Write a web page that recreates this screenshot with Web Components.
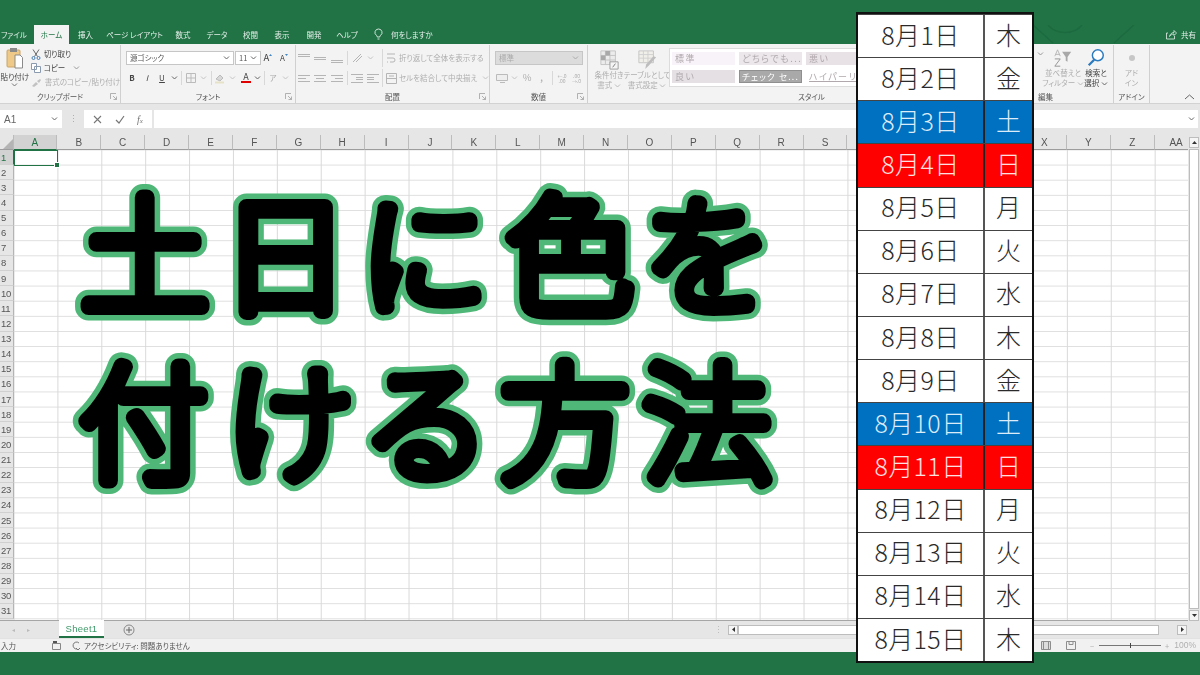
<!DOCTYPE html>
<html lang="ja">
<head>
<meta charset="utf-8">
<title>土日に色を付ける方法</title>
<style>
  html, body { margin: 0; padding: 0; background: #217346; overflow: hidden; }
  body { font-family: "Noto Sans CJK JP", "Noto Sans", sans-serif; }
</style>
</head>
<body>
<excel-app>
  <app-tabs></app-tabs>
  <app-ribbon></app-ribbon>
  <app-formula></app-formula>
  <sheet-grid></sheet-grid>
  <sheet-tabs></sheet-tabs>
  <app-status></app-status>
</excel-app>
<big-title></big-title>
<date-table></date-table>

<script>
const FONT = `"Noto Sans CJK JP", "Noto Sans", sans-serif`;

// small shared icons
const chev = (c = '#999') => `<svg width="7" height="4" viewBox="0 0 7 4"><path d="M1 .5l2.5 2.5L6 .5" fill="none" stroke="${c}"/></svg>`;
const lines = (rows, c = '#b5b5b5') => `<svg width="14" height="12" viewBox="0 0 14 12">${rows.map(r => `<path d="M${r[0]} ${r[2]}.5H${r[1]}" stroke="${c}"/>`).join('')}</svg>`;
const launcher = `<svg width="7" height="7" viewBox="0 0 7 7"><path d="M.5 6V.5H6M6.500 6.500L3 3M6.500 3.500v3h-3" fill="none" stroke="#a0a0a0" stroke-width=".8"/></svg>`;

class ExcelApp extends HTMLElement {
  constructor() {
    super();
    this.attachShadow({ mode: 'open' });
  }
  connectedCallback() {
    this.shadowRoot.innerHTML = `
      <style>
        :host { display: flex; flex-direction: column; width: 1200px; height: 675px; padding-top: 25px; box-sizing: border-box; background: #217346; filter: blur(.4px); overflow: hidden; font-family: ${FONT}; font-feature-settings: "palt"; }
      </style>
      <slot></slot>`;
  }
}

class AppTabs extends HTMLElement {
  constructor() {
    super();
    this.attachShadow({ mode: 'open' });
  }
  connectedCallback() {
    const tabs = [['ファイル', 34], ['ホーム', 35], ['挿入', 33], ['ページ レイアウト', 65], ['数式', 32], ['データ', 36], ['校閲', 31], ['表示', 32], ['開発', 32], ['ヘルプ', 34]];
    this.shadowRoot.innerHTML = `
      <style>
        :host { display: flex; height: 19px; flex: none; position: relative; color: #e4efe8; font-size: 7.5px; }
        .tab { display: flex; align-items: center; justify-content: center; box-sizing: border-box; white-space: nowrap; }
        .tab.first { padding-right: 6px; }
        .tab.on { background: #f3f3f3; color: #217346; }
        .bulb { display: flex; align-items: center; margin-left: 10px; gap: 8px; }
        .share { margin-left: auto; display: flex; align-items: center; gap: 4px; padding-right: 4px; }
        .deco { position: absolute; left: 1030px; top: 0; }
      </style>
      <svg class="deco" width="110" height="19" viewBox="0 0 110 19"><path d="M3 0l20 18M18 0c8 10 26 10 34 0M104 0L84 18" fill="none" stroke="#1c6a3f" stroke-width="1.5"/></svg>
      ${tabs.map((t, i) => `<div class="tab ${i === 0 ? 'first' : ''} ${i === 1 ? 'on' : ''}" style="width:${t[1]}px">${t[0]}</div>`).join('')}
      <div class="bulb">
        <svg width="9" height="13" viewBox="0 0 9 13"><path d="M4.500 1a3.500 3.500 0 0 0-2 6.400c.5.4.7 1 .7 1.600h2.600c0-.6.2-1.200.7-1.600A3.500 3.500 0 0 0 4.500 1zM3.500 11h2" fill="none" stroke="#e4efe8" stroke-width=".9"/></svg>
        <span>何をしますか</span>
      </div>
      <div class="share">
        <svg width="11" height="11" viewBox="0 0 11 11"><path d="M2 4H.5v6h8V7M3.500 7.500C4 5 6 3.500 8 3.500V1.500l2.500 2.500L8 6.500V5C6 5 4.500 6 3.500 7.500z" fill="none" stroke="#e4efe8" stroke-width=".8"/></svg>
        <span>共有</span>
      </div>`;
  }
}

class RbGroup extends HTMLElement {
  constructor() {
    super();
    this.attachShadow({ mode: 'open' });
  }
  connectedCallback() {
    const w = this.getAttribute('w');
    const bare = this.hasAttribute('bare');
    const left = this.hasAttribute('left');
    this.shadowRoot.innerHTML = `
      <style>
        :host { display: flex; flex-direction: column; flex: none; box-sizing: border-box; width: ${w}px; height: 58px; margin-top: 1px; ${bare ? '' : 'border-right: 1px solid #d0d0d0;'} }
        .body { flex: 1; min-height: 0; display: flex; flex-direction: column; padding-top: 3px; }
        .label { display: grid; grid-template-columns: ${left ? 'auto 1fr' : '1fr auto 1fr'}; align-items: center; height: 13px; flex: none; font-size: 7.5px; color: #555; line-height: 1; padding: 0 3px 0 3px; }
        .label span:last-child { justify-self: end; display: flex; }
        b { font-weight: 400; white-space: nowrap; }
      </style>
      <div class="body"><slot></slot></div>
      <div class="label">${left ? '' : '<i></i>'}<b>${this.getAttribute('label') || ''}</b><span>${this.hasAttribute('launch') ? launcher : ''}</span></div>`;
  }
}

class AppRibbon extends HTMLElement {
  constructor() {
    super();
    this.attachShadow({ mode: 'open' });
  }
  connectedCallback() {
    this.shadowRoot.innerHTML = `
      <style>
        :host { display: flex; flex: none; height: 59px; background: #f3f3f3; border-bottom: 1px solid #d2d2d2; font-size: 7.5px; color: #aeaeae; line-height: 1; position: relative; }
        .row { display: flex; align-items: center; height: 20px; flex: none; }
        .c { display: flex; align-items: center; justify-content: center; flex: none; height: 100%; }
        .sep { width: 1px; height: 14px; background: #d8d8d8; flex: none; }
        .select { box-sizing: border-box; height: 14px; background: #fff; border: 1px solid #c6c6c6; display: flex; align-items: center; justify-content: space-between; padding: 0 3px; color: #555; font-size: 7.5px; flex: none; }
        .select.off { background: #dcdcdc; color: #aaa; }
        .dark { color: #444; }
        .clip { display: flex; height: 42px; margin-top: -1px; }
        .paste { width: 30px; display: flex; flex-direction: column; align-items: center; color: #444; gap: 2px; }
        .cliprows { display: flex; flex-direction: column; padding-left: 1px; }
        .cliprows div { display: flex; align-items: center; gap: 3px; height: 14.5px; white-space: nowrap; }
        .big { display: flex; flex-direction: column; align-items: center; flex: none; line-height: 9.5px; text-align: center; white-space: nowrap; }
        .big svg.ico { height: 20px; flex: none; }
        .gallery { display: grid; grid-template-columns: 63px 63px 63px; gap: 5px 4px; background: #fff; border: 1px solid #dcdcdc; padding: 3px 2px; margin: 0 0 0 3px; font-size: 9px; letter-spacing: 1.5px; width: 200px; height: 31px; white-space: nowrap; overflow: hidden; flex: none; }
        .gallery div { height: 13px; display: flex; align-items: center; padding-left: 3px; color: #b0a8ad; overflow: hidden; }
        .arrow { position: absolute; right: 5px; bottom: 3px; }
        .more { position: absolute; left: 1037px; top: 8px; }
      </style>

      <rb-group w="121" label="クリップボード" launch>
        <div class="clip">
          <div class="paste">
            <svg width="17" height="24" viewBox="0 0 17 24"><rect x="1" y="3" width="13" height="17" rx="1" fill="#efc988" stroke="#c9a46a"/><rect x="4" y="1" width="7" height="4" fill="#8a8a8a"/><path d="M9 8h5l2.500 2.500V21H9z" fill="#fff" stroke="#8a8a8a"/></svg>
            <span style="white-space:nowrap">貼り付け</span>
            ${chev('#777')}
          </div>
          <div class="cliprows">
            <div class="dark"><svg width="10" height="11" viewBox="0 0 10 11"><path d="M2 .5l4.500 7M8 .5L3.500 7.500" stroke="#666" fill="none"/><circle cx="2.500" cy="9" r="1.500" fill="none" stroke="#4a7fb5"/><circle cx="7.500" cy="9" r="1.500" fill="none" stroke="#4a7fb5"/></svg><span>切り取り</span></div>
            <div class="dark"><svg width="10" height="10" viewBox="0 0 10 10"><path d="M.5.5h5v6h-5zM3.500 3.500h6v6h-6z" fill="#fff" stroke="#8a9bb0"/></svg><span>コピー</span><span style="margin-left:5px;display:flex">${chev()}</span></div>
            <div><svg width="11" height="9" viewBox="0 0 11 9"><path d="M1 8l4-4 2 2-4 3zM6 3l3-2 1 1-2 3z" fill="#c2c2c2"/></svg><span>書式のコピー/貼り付け</span></div>
          </div>
        </div>
      </rb-group>

      <rb-group w="175" label="フォント" launch>
        <div class="row" style="padding-left:5px;gap:1px">
          <div class="select" style="width:108px"><span>源ゴシック</span>${chev('#666')}</div>
          <div class="select" style="width:26px"><span>11</span>${chev('#666')}</div>
          <div class="c dark" style="width:14px;font-size:9.5px;margin-left:-1px">A<svg width="3" height="2" viewBox="0 0 3 2" style="margin-bottom:6px"><path d="M1.500 0L3 2H0z" fill="#3f87c7"/></svg></div>
          <div class="c dark" style="width:16px;font-size:8px">A<svg width="3" height="2" viewBox="0 0 3 2" style="margin-bottom:6px"><path d="M1.500 2L3 0H0z" fill="#3f87c7"/></svg></div>
        </div>
        <div class="row" style="padding-left:3.5px;color:#444;font-size:8px">
          <div class="c" style="width:15px;font-weight:700">B</div>
          <div class="c" style="width:15px;font-style:italic">I</div>
          <div class="c" style="width:15px;text-decoration:underline">U</div>
          <div class="c" style="width:9px">${chev('#666')}</div>
          <div class="sep" style="margin:0 3.5px 0 2.5px"></div>
          <div class="c" style="width:11px"><svg width="10" height="10" viewBox="0 0 10 10"><path d="M.5.500h9v9h-9zM5 .5v9M.5 5h9" fill="none" stroke="#bbb"/></svg></div>
          <div class="c" style="width:13px">${chev('#c4c4c4')}</div>
          <div class="sep" style="margin:0 1px 0 1.5px"></div>
          <div class="c" style="width:14px"><svg width="12" height="11" viewBox="0 0 12 11"><path d="M2 6l4-4 3 3-3 3z" fill="#d8d8d8" stroke="#bbb"/><path d="M1 9.500h9" stroke="#e6e2c8" stroke-width="2"/></svg></div>
          <div class="c" style="width:10px">${chev('#c4c4c4')}</div>
          <div class="c" style="width:16px;margin-left:1px;flex-direction:column;line-height:.9;color:#444"><span style="font-size:9px">A</span><span style="width:10px;height:2.5px;background:#e00000;display:block"></span></div>
          <div class="c" style="width:7px">${chev('#666')}</div>
          <div class="sep" style="margin:0 .5px 0 3px"></div>
          <div class="c" style="width:15px;font-size:7.5px;color:#aaa">ア</div>
          <div class="c" style="width:9px">${chev('#c4c4c4')}</div>
        </div>
      </rb-group>

      <rb-group w="194" label="配置" launch>
        <div class="row">
          <div class="c" style="width:16px">${lines([[1, 13, 2], [1, 13, 4]])}</div>
          <div class="c" style="width:16px">${lines([[1, 13, 5], [1, 13, 7]])}</div>
          <div class="c" style="width:18px">${lines([[1, 13, 8], [1, 13, 10]])}</div>
          <div class="sep" style="margin:0 1px 0 1px"></div>
          <div class="c" style="width:16px"><svg width="13" height="12" viewBox="0 0 13 12"><path d="M2 10L10 2M5 10l6-6" stroke="#b5b5b5" fill="none"/></svg></div>
          <div class="c" style="width:10px">${chev('#c4c4c4')}</div>
          <div class="sep" style="margin:0 0 0 7px;height:18px"></div>
          <div class="c" style="width:16px"><svg width="10" height="12" viewBox="0 0 10 12"><path d="M1 2h8M1 6h6a2 2 0 0 1 0 4H4M1 10h1" fill="none" stroke="#b5b5b5"/></svg></div>
          <span style="white-space:nowrap">折り返して全体を表示する</span>
        </div>
        <div class="row">
          <div class="c" style="width:16px">${lines([[1, 13, 3], [1, 9, 6], [1, 13, 9]])}</div>
          <div class="c" style="width:16px">${lines([[1, 13, 3], [3, 11, 6], [1, 13, 9]])}</div>
          <div class="c" style="width:18px">${lines([[1, 13, 3], [5, 13, 6], [1, 13, 9]])}</div>
          <div class="sep" style="margin:0 1px 0 1px"></div>
          <div class="c" style="width:16px">${lines([[1, 13, 2], [6, 13, 5], [6, 13, 7], [1, 13, 10]])}</div>
          <div class="c" style="width:15px">${lines([[1, 13, 2], [1, 8, 5], [1, 8, 7], [1, 13, 10]])}</div>
          <div class="sep" style="margin:0 0 0 2px;height:18px"></div>
          <div class="c" style="width:16px"><svg width="11" height="11" viewBox="0 0 11 11"><path d="M.5.500h10v10H.5zM.5 5.500h10M3 3h5" fill="none" stroke="#b5b5b5"/></svg></div>
          <span style="white-space:nowrap">セルを結合して中央揃え</span>
          <span style="margin-left:5px;display:flex">${chev('#c4c4c4')}</span>
        </div>
      </rb-group>

      <rb-group w="98" label="数値" launch>
        <div class="row" style="padding-left:5px">
          <div class="select off" style="width:88px"><span>標準</span>${chev('#aaa')}</div>
        </div>
        <div class="row" style="padding-left:4px;font-size:8px">
          <div class="c" style="width:15px"><svg width="12" height="9" viewBox="0 0 12 9"><path d="M.5.500h11v6H.5z" fill="#eee" stroke="#bbb"/><path d="M4 8.500h5" stroke="#bbb"/></svg></div>
          <div class="c" style="width:10px">${chev('#c4c4c4')}</div>
          <div class="c" style="width:16px;font-size:9.5px">%</div>
          <div class="c" style="width:13px;font-weight:700">,</div>
          <div class="sep" style="margin:0 2px 0 4px"></div>
          <div class="c" style="width:14px;font-size:5px;line-height:5.5px;text-align:center">←.0<br>.00</div>
          <div class="c" style="width:15px;font-size:5px;line-height:5.5px;text-align:center">.00<br>→.0</div>
        </div>
      </rb-group>

      <rb-group w="447" label="スタイル" bare>
        <div style="display:flex">
          <div class="big" style="width:36px;margin:2px 0 0 3px">
            <svg class="ico" width="21" height="20" viewBox="0 0 21 22"><path d="M1 1h16v15H1z" fill="#ececec" stroke="#c2c2c2"/><path d="M6 1v15M11 1v15M1 6h16M1 11h16" stroke="#c2c2c2"/><path d="M6 1h5v5H6zM1 6h5v5H1z" fill="#a9a9a9"/><path d="M11 13h9v8h-9z" fill="#f4f4f4" stroke="#999"/><path d="M14 19l3-4" stroke="#777"/></svg>
            <span>条件付き<br>書式 ${chev('#bbb')}</span>
          </div>
          <div class="big" style="width:38px;margin:2px 0 0 1px">
            <svg class="ico" width="21" height="20" viewBox="0 0 21 22"><path d="M1 1h16v13H1z" fill="#f1efe9" stroke="#c2c2c2"/><path d="M1 5h16M1 9h16M6 1v13M11 1v13" stroke="#cfcfcf"/><path d="M20 8L12 17l-4 4 1-5 8-9z" fill="#bdbdbd"/></svg>
            <span>テーブルとして<br>書式設定 ${chev('#bbb')}</span>
          </div>
          <div class="gallery">
            <div style="background:#f8f3f8">標準</div>
            <div style="background:#ebe7eb">どちらでも...</div>
            <div style="background:#e8e1e5">悪い</div>
            <div style="background:#e4e0e4">良い</div>
            <div style="background:#a9a9a9;color:#fff;outline:1px solid #8f8f8f;outline-offset:-1px;font-size:8.5px;letter-spacing:1.2px">チェック セ...</div>
            <div style="text-decoration:underline">ハイパーリ</div>
          </div>
        </div>
      </rb-group>

      <rb-group w="79" label="編集" left>
        <div style="display:flex;padding-left:10px">
          <div class="big" style="width:36px">
            <svg class="ico" width="20" height="20" viewBox="0 0 20 22"><path d="M9 4h10l-4 6v5l-2-1v-4z" fill="#a8a8a8"/><path d="M1 9l3-7 3 7M2 7h4" fill="none" stroke="#b4b4b4"/><path d="M1 12h6l-6 8h6" fill="none" stroke="#8f8f8f"/></svg>
            <span>並べ替えと<br>フィルター ${chev('#bbb')}</span>
          </div>
          <div class="big dark" style="width:30px">
            <svg class="ico" width="20" height="20" viewBox="0 0 20 22"><circle cx="12" cy="8" r="6" fill="#fff" stroke="#2a7ac0" stroke-width="1.6"/><path d="M8 13l-6 6" stroke="#2a7ac0" stroke-width="2.5"/></svg>
            <span>検索と<br>選択 ${chev('#666')}</span>
          </div>
        </div>
      </rb-group>

      <rb-group w="36" label="アドイン">
        <div class="big">
          <svg class="ico" width="20" height="20" viewBox="0 0 20 20"><circle cx="10" cy="10" r="3" fill="#c6c6c6"/></svg>
          <span>アド<br>イン</span>
        </div>
      </rb-group>

      <svg class="more" width="7" height="4" viewBox="0 0 7 4"><path d="M1 .5l2.500 2.500L6 .5" fill="none" stroke="#999"/></svg>
      <svg class="arrow" width="11" height="6" viewBox="0 0 11 6"><path d="M1 5l4.500-4L10 5" fill="none" stroke="#666"/></svg>`;
  }
}

class AppFormula extends HTMLElement {
  constructor() {
    super();
    this.attachShadow({ mode: 'open' });
  }
  connectedCallback() {
    this.shadowRoot.innerHTML = `
      <style>
        :host { display: flex; flex: none; height: 31px; box-sizing: border-box; padding: 6px 2px 7px 0; background: #e6e6e6; gap: 2px; font-family: "Liberation Sans", sans-serif; font-size: 10px; color: #666; }
        .box { background: #fff; display: flex; align-items: center; }
        .name { width: 62px; justify-content: space-between; padding: 0 4px; box-sizing: border-box; }
        .dots { width: 18px; display: flex; justify-content: center; align-items: center; color: #aaa; font-size: 9px; }
        .fx { width: 68px; justify-content: space-around; padding: 0 3px; box-sizing: border-box; color: #777; }
        .input { flex: 1; justify-content: flex-end; padding-right: 3px; }
      </style>
      <div class="box name"><span>A1</span>${chev('#666')}</div>
      <div class="dots">⋮</div>
      <div class="box fx">
        <svg width="9" height="9" viewBox="0 0 9 9"><path d="M1 1l7 7M8 1L1 8" stroke="#777" stroke-width="1.100"/></svg>
        <svg width="10" height="9" viewBox="0 0 10 9"><path d="M1 5l3 3 5-7" fill="none" stroke="#777" stroke-width="1.200"/></svg>
        <i style="font-family:'Liberation Serif',serif;font-size:10px">f<span style="font-size:7px">x</span></i>
      </div>
      <div class="box input">${chev('#666')}</div>`;
  }
}

class SheetGrid extends HTMLElement {
  constructor() {
    super();
    this.attachShadow({ mode: 'open' });
  }
  connectedCallback() {
    // T to W sit behind the date table, so they stay blank
    const cols = 'ABCDEFGHIJKLMNOPQRS    XYZ'.split('').concat('AA');
    const rows = Array.from({ length: 31 }, (_, i) => i + 1);
    this.shadowRoot.innerHTML = `
      <style>
        :host { display: grid; grid-template-columns: 1fr 12px; flex: none; height: 486px; background: #e6e6e6; font-family: "Liberation Sans", sans-serif; font-size: 10px; color: #555; }
        .sheet { display: grid; grid-template-columns: 13.5px 1fr; grid-template-rows: 15px 1fr; overflow: hidden; border-bottom: 1px solid #a6a6a6; }
        .corner { background: #e6e6e6; border-bottom: 1px solid #9d9d9d; border-right: 1px solid #bbb; box-sizing: border-box; display: flex; align-items: flex-end; justify-content: flex-end; }
        .heads { display: flex; overflow: hidden; }
        .head { flex: none; width: 43.9px; box-sizing: border-box; border-right: 1px solid #bcbcbc; border-bottom: 1px solid #9d9d9d; display: flex; align-items: center; justify-content: center; }
        .head.on { background: #d2d2d2; color: #217346; border-bottom-color: #217346; }
        .nums { display: flex; flex-direction: column; overflow: hidden; }
        .num { flex: none; height: 15.13px; box-sizing: border-box; border-right: 1px solid #b4b4b4; border-bottom: 1px solid #d0d0d0; display: flex; align-items: center; justify-content: flex-start; padding-left: 1px; font-size: 9.5px; letter-spacing: -.3px; }
        .num.on { background: #d2d2d2; color: #217346; border-right-color: #217346; }
        .cells { position: relative; background-color: #fff; background-image: linear-gradient(to right, #d9d9d9 1px, transparent 1px), linear-gradient(to bottom, #dedede 1px, transparent 1px); background-size: 43.9px 15.13px; background-position: 43.4px 0, 0 14.6px; }
        .sel { position: absolute; left: 0; top: 0; width: 44px; height: 16px; box-sizing: border-box; border: 1.5px solid #217346; }
        .sel i { position: absolute; right: -3px; bottom: -3px; width: 4px; height: 4px; background: #217346; border: .5px solid #fff; }
        .vbar { display: flex; flex-direction: column; background: #e6e6e6; padding: 2px 1px 0 1px; box-sizing: border-box; gap: 1px; }
        .btn { height: 11px; flex: none; background: #f5f5f5; border: 1px solid #bdbdbd; box-sizing: border-box; display: flex; align-items: center; justify-content: center; }
        .thumb { flex: none; height: 460px; background: #fff; border: 1px solid #bdbdbd; box-sizing: border-box; }
      </style>
      <div class="sheet">
        <div class="corner"><svg width="10" height="10" viewBox="0 0 10 10"><path d="M10 0v10H0z" fill="#b4b4b4"/></svg></div>
        <div class="heads">${cols.map((c, i) => `<div class="head ${i === 0 ? 'on' : ''}">${c.trim()}</div>`).join('')}</div>
        <div class="nums">${rows.map((r, i) => `<div class="num ${i === 0 ? 'on' : ''}">${r}</div>`).join('')}</div>
        <div class="cells"><div class="sel"><i></i></div></div>
      </div>
      <div class="vbar">
        <div class="btn"><svg width="5" height="3" viewBox="0 0 5 3"><path d="M2.500 0L5 3H0z" fill="#333"/></svg></div>
        <div class="thumb"></div>
        <div class="btn"><svg width="5" height="3" viewBox="0 0 5 3"><path d="M2.500 3L5 0H0z" fill="#333"/></svg></div>
      </div>`;
  }
}

class SheetTabs extends HTMLElement {
  constructor() {
    super();
    this.attachShadow({ mode: 'open' });
  }
  connectedCallback() {
    this.shadowRoot.innerHTML = `
      <style>
        :host { display: flex; align-items: stretch; flex: none; height: 17px; background: #e6e6e6; font-size: 9px; color: #bbb; }
        .nav { width: 59px; display: flex; align-items: center; gap: 12px; padding-left: 12px; box-sizing: border-box; font-size: 6px; }
        .tab { width: 45px; background: #fff; color: #3f9a6a; box-sizing: border-box; border-bottom: 2px solid #217346; margin-top: -1px; display: flex; align-items: center; justify-content: center; font-family: "Liberation Sans", sans-serif; font-size: 9.5px; letter-spacing: .3px; }
        .add { width: 50px; display: flex; align-items: center; justify-content: center; }
        .dots { margin-left: auto; width: 20px; display: flex; align-items: center; justify-content: center; }
        .hbar { display: flex; align-items: center; width: 460px; margin-right: 12px; }
        .btn { width: 10px; height: 10px; box-sizing: border-box; background: #f5f5f5; border: 1px solid #bdbdbd; display: flex; align-items: center; justify-content: center; flex: none; }
        .track { width: 421px; height: 10px; background: #fff; border: 1px solid #bdbdbd; box-sizing: border-box; flex: none; }
      </style>
      <div class="nav"><span>◂</span><span>▸</span></div>
      <div class="tab">Sheet1</div>
      <div class="add"><svg width="12" height="12" viewBox="0 0 12 12"><circle cx="6" cy="6" r="5" fill="none" stroke="#888"/><path d="M6 3v6M3 6h6" stroke="#666"/></svg></div>
      <div class="dots">⋮</div>
      <div class="hbar">
        <div class="btn"><svg width="3" height="5" viewBox="0 0 3 5"><path d="M0 2.500L3 0v5z" fill="#333"/></svg></div>
        <div class="track"></div>
        <div style="width:18px;flex:none"></div>
        <div class="btn"><svg width="3" height="5" viewBox="0 0 3 5"><path d="M3 2.500L0 0v5z" fill="#333"/></svg></div>
      </div>`;
  }
}

class AppStatus extends HTMLElement {
  constructor() {
    super();
    this.attachShadow({ mode: 'open' });
  }
  connectedCallback() {
    this.shadowRoot.innerHTML = `
      <style>
        :host { display: flex; align-items: center; flex: none; height: 14px; background: #f1f1f1; font-size: 7.5px; color: #555; padding: 0 4px 0 1px; line-height: 1; border-top: 1px solid #e2e2e2; box-sizing: border-box; }
        .right { margin-left: auto; display: flex; align-items: center; color: #b0b0b0; }
        .slider { width: 62px; height: 1px; background: #777; position: relative; margin: 0 3px; }
        .slider i { position: absolute; left: 31px; top: -2px; width: 1px; height: 5px; background: #444; }
      </style>
      <span style="width:51px">入力</span>
      <svg width="9" height="9" viewBox="0 0 9 9"><path d="M.5 2.500h8v6h-8z" fill="none" stroke="#888"/><path d="M1 0h4v2H1z" fill="#555"/></svg>
      <svg style="margin-left:11px" width="9" height="10" viewBox="0 0 9 10"><path d="M7 2a3.500 3.500 0 1 0-2 6M4 7l2 2 2-2" fill="none" stroke="#777"/></svg>
      <span style="margin-left:3px;white-space:nowrap">アクセシビリティ: 問題ありません</span>
      <div class="right">
        <svg width="10" height="9" viewBox="0 0 10 9"><path d="M.5.500h9v8h-9zM2.500.5v8M7.500.5v8" fill="#ddd" stroke="#8e8e8e"/></svg>
        <svg style="margin:0 14px 0 15px" width="10" height="9" viewBox="0 0 10 9"><path d="M.5.500h9v8h-9zM3 .5v3h4v-3" fill="none" stroke="#8e8e8e"/></svg>
        <span style="margin-right:2px">−</span>
        <div class="slider"><i></i></div>
        <span style="margin:0 5px 0 1px">+</span>
        <span style="font-family:'Liberation Sans',sans-serif;font-size:8.5px">100%</span>
      </div>`;
  }
}

// title sits on top of the sheet
class BigTitle extends HTMLElement {
  constructor() {
    super();
    this.attachShadow({ mode: 'open' });
  }
  connectedCallback() {
    const line1 = '81 221 360 506 644';
    const line2 = '80 225 362 501 643';
    this.shadowRoot.innerHTML = `
      <style>
        :host { display: block; position: absolute; left: 0; top: 0; width: 860px; height: 675px; pointer-events: none; }
        text { font-family: ${FONT}; font-size: 128px; font-weight: 100; }
      </style>
      <svg width="860" height="675" viewBox="0 0 860 675">
        <g stroke="#4fb878" stroke-width="27" stroke-linejoin="round" stroke-linecap="round">
          <use href="#l1"></use><use href="#l2"></use>
        </g>
        <g fill="#000" stroke="#000" stroke-width="16" stroke-linejoin="round" stroke-linecap="round">
          <text id="l1" x="${line1}" y="304">土日に色を</text>
          <text id="l2" x="${line2}" y="472">付ける方法</text>
        </g>
      </svg>`;
  }
}

class DateTable extends HTMLElement {
  constructor() {
    super();
    this.attachShadow({ mode: 'open' });
  }
  connectedCallback() {
    const days = ['木', '金', '土', '日', '月', '火', '水'];
    const rows = Array.from({ length: 15 }, (_, i) => {
      const d = days[i % 7];
      const kind = d === '土' ? 'sat' : d === '日' ? 'sun' : '';
      return `<div class="row ${kind}"><div class="date">8月${i + 1}日</div><div class="day">${d}</div></div>`;
    });
    this.shadowRoot.innerHTML = `
      <style>
        :host { display: flex; flex-direction: column; position: absolute; left: 856px; top: 12px; width: 178px; height: 651px; box-sizing: border-box; border: 2px solid #111; background: #fff; font-family: ${FONT}; font-weight: 300; color: #2a2a2a; }
        .row { flex: 1; min-height: 0; display: grid; grid-template-columns: 127px 1fr; border-top: 1.5px solid #444; }
        .row:first-child { border-top: none; }
        .date, .day { display: flex; align-items: center; justify-content: center; line-height: 1; padding-bottom: 4px; }
        .date { font-size: 25px; letter-spacing: .4px; border-right: 2px solid #555; }
        .day { font-size: 25px; }
        .sat { background: #0070c0; color: #dcecf8; }
        .sun { background: #ff0000; color: #ffe0e0; }
        .sat .date, .sun .date { border-right-color: #222; }
      </style>
      ${rows.join('')}`;
  }
}

customElements.define('excel-app', ExcelApp);
customElements.define('app-tabs', AppTabs);
customElements.define('rb-group', RbGroup);
customElements.define('app-ribbon', AppRibbon);
customElements.define('app-formula', AppFormula);
customElements.define('sheet-grid', SheetGrid);
customElements.define('sheet-tabs', SheetTabs);
customElements.define('app-status', AppStatus);
customElements.define('big-title', BigTitle);
customElements.define('date-table', DateTable);
</script>
</body>
</html>
